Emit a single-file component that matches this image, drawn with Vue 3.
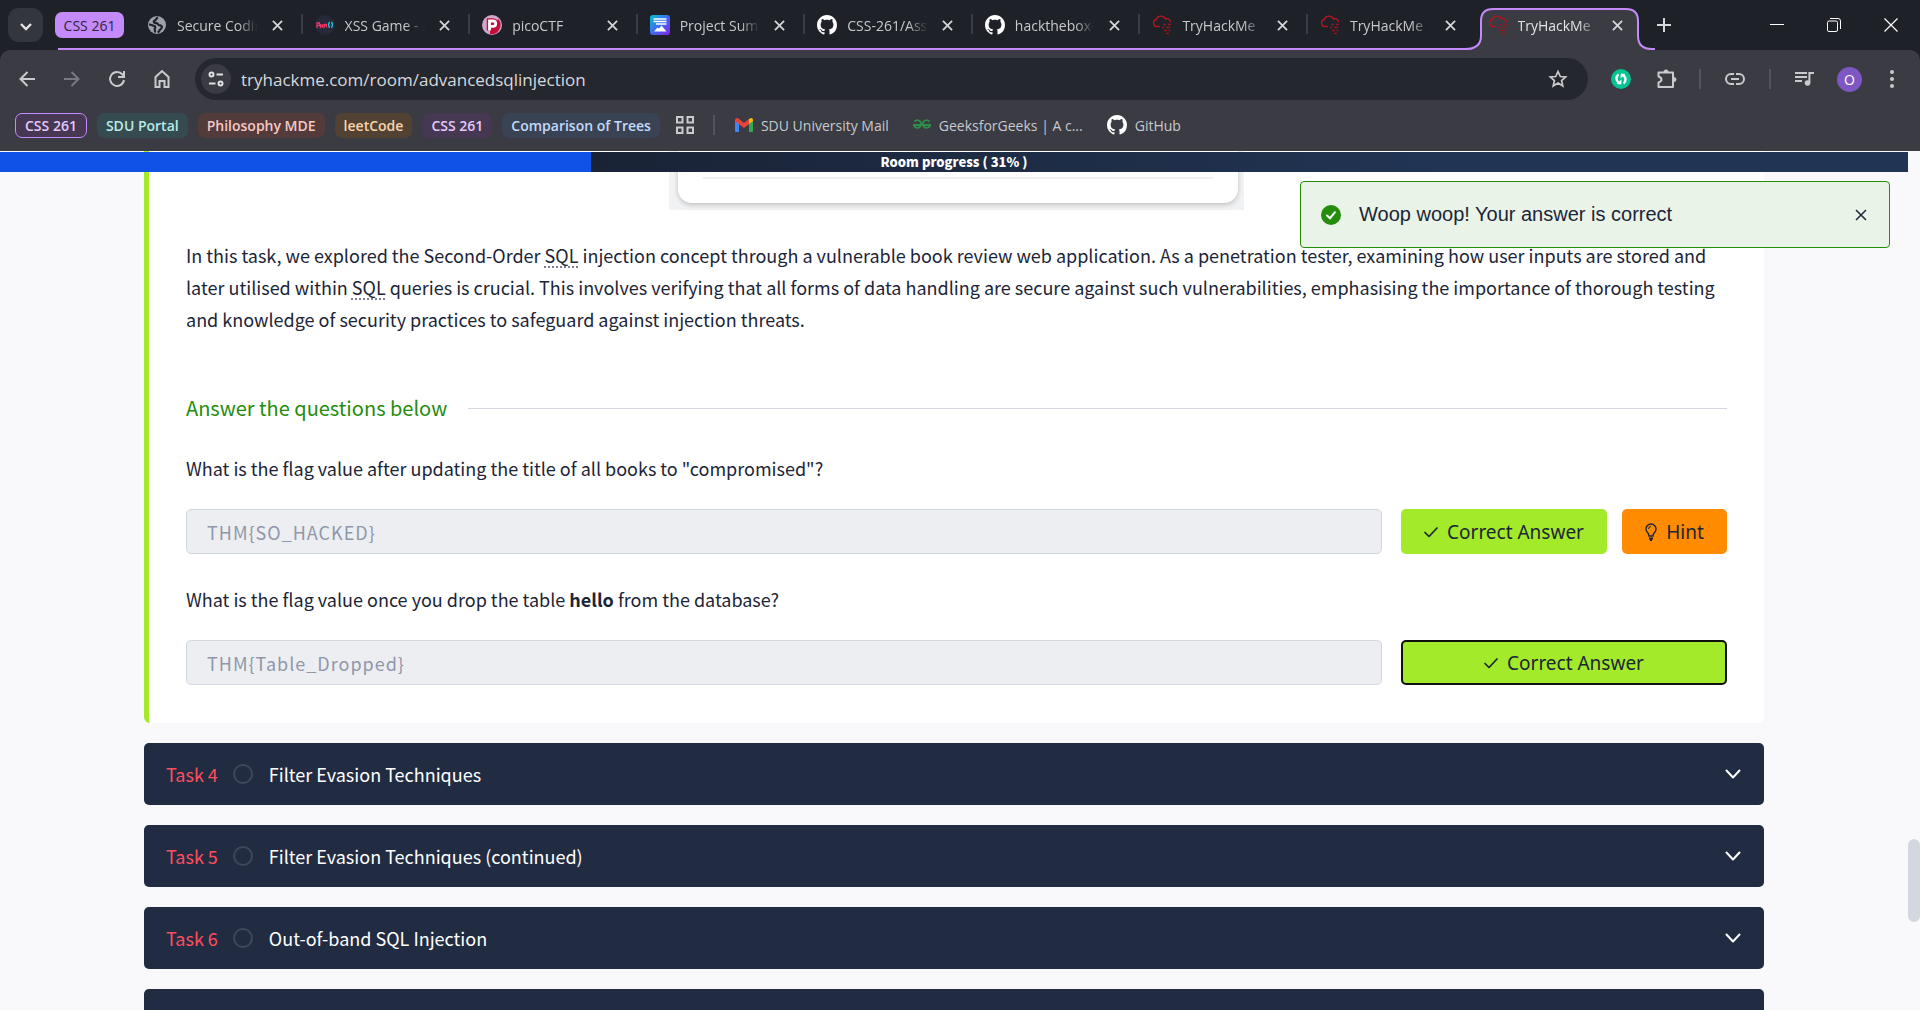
<script setup>
import { ref } from 'vue'

const tabs = [
  { title: 'Secure Coding', icon: 'globe' },
  { title: 'XSS Game - P', icon: 'pwn' },
  { title: 'picoCTF', icon: 'pico' },
  { title: 'Project Summ', icon: 'project' },
  { title: 'CSS-261/Assi', icon: 'github' },
  { title: 'hackthebox-w', icon: 'github' },
  { title: 'TryHackMe | L', icon: 'thm' },
  { title: 'TryHackMe | A', icon: 'thm' },
  { title: 'TryHackMe | A', icon: 'thm', active: true },
]

const groups = [
  { name: 'CSS 261', tone: 'open' },
  { name: 'SDU Portal', tone: 'teal' },
  { name: 'Philosophy MDE', tone: 'red' },
  { name: 'leetCode', tone: 'orange' },
  { name: 'CSS 261', tone: 'purple' },
  { name: 'Comparison of Trees', tone: 'blue' },
]

const address = ref('tryhackme.com/room/advancedsqlinjection')
const progress = 31
const tasks = [
  { id: 4, title: 'Filter Evasion Techniques' },
  { id: 5, title: 'Filter Evasion Techniques (continued)' },
  { id: 6, title: 'Out-of-band SQL Injection' },
  { id: 7, title: '' },
]
</script>

<template>
  <div class="window">
    <svg class="defs" aria-hidden="true">
      <symbol id="github" viewBox="0 0 16 16">
        <path fill="currentColor" d="M8 0C3.58 0 0 3.58 0 8c0 3.54 2.29 6.53 5.47 7.59.4.07.55-.17.55-.38 0-.19-.01-.82-.01-1.49-2.01.37-2.53-.49-2.69-.94-.09-.23-.48-.94-.82-1.13-.28-.15-.68-.52-.01-.53.63-.01 1.08.58 1.23.82.72 1.21 1.87.87 2.33.66.07-.52.28-.87.51-1.07-1.78-.2-3.64-.89-3.64-3.95 0-.87.31-1.59.82-2.15-.08-.2-.36-1.02.08-2.12 0 0 .67-.21 2.2.82.64-.18 1.32-.27 2-.27s1.36.09 2 .27c1.53-1.04 2.2-.82 2.2-.82.44 1.1.16 1.92.08 2.12.51.56.82 1.27.82 2.15 0 3.07-1.87 3.75-3.65 3.95.29.25.54.73.54 1.48 0 1.07-.01 1.93-.01 2.2 0 .21.15.46.55.38A8.01 8.01 0 0 0 16 8c0-4.42-3.58-8-8-8z" />
      </symbol>
      <symbol id="globe" viewBox="0 0 20 20">
        <circle cx="10" cy="10" r="9" fill="#9da1a8" />
        <path d="M11 2.500c-2 .8-1.400 2-2.600 2.600S6 6.200 7.200 7.400s3.400.2 3.800 1.800 2.400.8 3.400 1.600.4 2.600-1 3.600-1.200 2.400-2.800 3.200M2 9.500c2 0 3 .6 4.400 1.200s2.600 1 1.600 2.400.4 2.400 0 4.400" fill="none" stroke="#1e2128" stroke-width="2.200" />
      </symbol>
      <symbol id="pwn" viewBox="0 0 20 20">
        <circle cx="10" cy="10" r="10" fill="#262937" />
        <g fill="none" stroke-width="1.300">
          <path stroke="#f0356b" d="M2 13V8h2.400v2.600H2M5.500 9v3.200l1.200-1.500 1.200 1.500V9M9.500 12.500V9.500h2v3" />
          <path stroke="#1cc6d6" d="M14.500 6.800q-1.800 3 0 6M16.500 6.800q1.800 3 0 6" />
        </g>
      </symbol>
      <symbol id="pico" viewBox="0 0 20 20">
        <circle cx="10" cy="10" r="10" fill="#cfa9cc" />
        <path d="M16.500 4A9.500 9.500 0 0 1 8 19.300V12z" fill="#c1103a" />
        <path d="M7.500 15.500V6H11a2.700 2.700 0 0 1 0 5.400H8" fill="none" stroke="#c1103a" stroke-width="5.500" />
        <path d="M7.500 15.500V6H11a2.700 2.700 0 0 1 0 5.400H8" fill="none" stroke="#fff" stroke-width="2.800" />
      </symbol>
      <symbol id="project" viewBox="0 0 20 20">
        <linearGradient id="projectFill" x1="0" y1="0" x2="1" y2="1">
          <stop offset="0" stop-color="#06c3cf" /><stop offset=".5" stop-color="#3d6bf2" /><stop offset="1" stop-color="#8a22e6" />
        </linearGradient>
        <rect width="20" height="20" rx="3" fill="url(#projectFill)" />
        <path d="M3.500 4h13M3.500 6.500h13M6 9h10.500" stroke="#fff" stroke-width="1.600" />
        <path d="M4 16.500 7.500 12.500l1.500 1 2.500-3 5 6z" fill="#fff" />
      </symbol>
      <symbol id="thm" viewBox="0 0 20 20">
        <path d="M8 11.500H4.500a3.600 3.600 0 0 1-.3-7A5 5 0 0 1 13.500 4a3.400 3.400 0 0 1 5 3.500" fill="none" stroke="#b3161b" stroke-width="1.300" />
        <path d="M11 9.500h3m2 0h3M10 12.500h2m2 0h4M12 15.500h3m1.500 0h2M14 18.500h3" stroke="#8d181d" stroke-width="1.500" />
      </symbol>
      <symbol id="check" viewBox="0 0 14 14">
        <path d="m1 7.500 4 4L13 3" fill="none" stroke="currentColor" stroke-width="1.700" stroke-linecap="round" stroke-linejoin="round" />
      </symbol>
      <symbol id="cross" viewBox="0 0 12 12">
        <path d="m1 1 10 10M11 1 1 11" fill="none" stroke="currentColor" stroke-width="1.900" />
      </symbol>
    </svg>

    <header class="browser">
      <div class="tab-strip">
        <button class="tab-search" aria-label="Search tabs">
          <svg width="12" height="8" viewBox="0 0 12 8"><path d="m1 1 5 5 5-5" fill="none" stroke="#e3e4e8" stroke-width="2.400" /></svg>
        </button>
        <button class="tab-group">CSS 261</button>
        <nav class="tabs" aria-label="Tabs">
          <div v-for="(tab, i) in tabs" :key="i" class="tab" :class="{ active: tab.active }">
            <svg v-if="tab.active" class="tab-shape" width="190" height="42" viewBox="0 0 190 42">
              <path d="M0 42Q16 42 16 28V13Q16 1 28 1H161Q173 1 173 13V28Q173 42 190 42z" fill="#3a3b43" />
              <path d="M0 41Q16 41 16 28V13Q16 1 28 1H161Q173 1 173 13V28Q173 41 187 41H190" fill="none" stroke="#c58af9" stroke-width="2" />
            </svg>
            <svg class="favicon"><use :href="'#' + tab.icon" /></svg>
            <span class="tab-title">{{ tab.title }}</span>
            <button class="tab-close" aria-label="Close tab"><svg width="11" height="11"><use href="#cross" /></svg></button>
          </div>
        </nav>
        <div class="strip-end">
          <button class="icon" aria-label="New tab">
            <svg width="14" height="14" viewBox="0 0 14 14"><path d="M7 0v14M0 7h14" stroke="#d6d8dc" stroke-width="2" /></svg>
          </button>
          <div class="window-buttons">
            <button class="icon" aria-label="Minimize"><svg width="14" height="14" viewBox="0 0 14 14"><path d="M0 6.500h14" stroke="#fff" /></svg></button>
            <button class="icon" aria-label="Restore">
              <svg width="14" height="14" viewBox="0 0 14 14" fill="none" stroke="#fff"><rect x=".5" y="3" width="10" height="10.500" rx="1.500" /><path d="M3 .5h8Q13.500.5 13.500 3v8" /></svg>
            </button>
            <button class="icon" aria-label="Close window"><svg width="14" height="14" viewBox="0 0 14 14"><path d="m.5.5 13 13M13.500.5.5 13.500" stroke="#fff" stroke-width="1.200" /></svg></button>
          </div>
        </div>
      </div>

      <div class="toolbar">
        <div class="nav-buttons">
          <button class="icon" aria-label="Back"><svg width="18" height="18" viewBox="0 0 18 18" fill="none" stroke="#c9cacf" stroke-width="2"><path d="M17 9H3M9.500 2 2.500 9l7 7" /></svg></button>
          <button class="icon" aria-label="Forward"><svg width="18" height="18" viewBox="0 0 18 18" fill="none" stroke="#787a81" stroke-width="2"><path d="M1 9h14M8.500 2l7 7-7 7" /></svg></button>
          <button class="icon" aria-label="Reload"><svg width="18" height="18" viewBox="0 0 18 18" fill="none" stroke="#c9cacf" stroke-width="2"><path d="M16 10A7 7 0 1 1 14.500 4.500L16 6" /><path d="M16 1v6h-6" /></svg></button>
          <button class="icon" aria-label="Home"><svg width="18" height="20" viewBox="0 0 18 20" fill="none" stroke="#c9cacf" stroke-width="2"><path d="M2.500 18V8L9 2l6.500 6v10h-4v-6h-5v6z" /></svg></button>
        </div>
        <div class="omnibox">
          <button class="site-info" aria-label="View site information">
            <svg width="16" height="16" viewBox="0 0 16 16" fill="none" stroke="#dfe0e4" stroke-width="2"><circle cx="3.500" cy="3.500" r="2" /><path d="M8.500 3.500H15M1 12.500h6.500" /><circle cx="12.500" cy="12.500" r="2" /></svg>
          </button>
          <input v-model="address" class="address" type="text" aria-label="Address" spellcheck="false" />
          <button class="icon" aria-label="Bookmark this page"><svg width="20" height="20" viewBox="0 0 20 20"><path d="m10 2.500 2.300 5 5.400.5-4.100 3.600 1.200 5.400-4.800-2.900L5.200 17l1.200-5.400L2.300 8l5.400-.5z" fill="none" stroke="#c9cacf" stroke-width="1.700" /></svg></button>
        </div>
        <div class="extensions">
          <button class="icon slot" aria-label="Sync extension">
            <svg width="20" height="20" viewBox="0 0 20 20"><circle cx="10" cy="10" r="10" fill="#06c392" /><path d="M7.500 5.500A5 5 0 0 0 7.500 13.500M12.500 14.500A5 5 0 0 0 12.500 6.500" fill="none" stroke="#fff" stroke-width="2.400" /><path d="m10.500 10.500-.3 5-4.700-.5zM9.500 9.500l.3-5 4.700.5z" fill="#fff" /></svg>
          </button>
          <button class="icon slot" aria-label="Extensions">
            <svg width="22" height="22" viewBox="0 0 22 22"><path d="M2.500 4.500H17V19H2.500v-4.500q3-1 3-3t-3-3z" fill="none" stroke="#c9cacf" stroke-width="2" stroke-linejoin="round" /><path d="M7.500 4a2.500 2.500 0 0 1 5 0zM18 9a2.500 2.500 0 0 1 0 5z" fill="#c9cacf" /></svg>
          </button>
          <span class="divider"></span>
          <button class="icon slot wide" aria-label="Copy link"><svg width="20" height="12" viewBox="0 0 20 12" fill="none" stroke="#c9cacf" stroke-width="2"><path d="M9 1H6a5 5 0 0 0 0 10h3M11 1h3a5 5 0 0 1 0 10h-3M6 6h8" /></svg></button>
          <span class="divider"></span>
          <button class="icon slot wide" aria-label="Media controls"><svg width="20" height="18" viewBox="0 0 20 18" fill="none" stroke="#c9cacf" stroke-width="2"><path d="M0 3h12M0 7h12M0 11h7" /><circle cx="12.500" cy="13" r="2.800" fill="#c9cacf" stroke="none" /><path d="M14.400 13V3H19" /></svg></button>
          <button class="avatar" aria-label="Profile">O</button>
          <button class="icon slot" aria-label="Menu"><svg width="4" height="18" viewBox="0 0 4 18" fill="#c9cacf"><circle cx="2" cy="2" r="2" /><circle cx="2" cy="9" r="2" /><circle cx="2" cy="16" r="2" /></svg></button>
        </div>
      </div>

      <nav class="bookmarks" aria-label="Bookmarks">
        <button v-for="(group, i) in groups" :key="i" class="group" :class="group.tone">{{ group.name }}</button>
        <button class="icon apps" aria-label="Apps">
          <svg width="18" height="18" viewBox="0 0 18 18" fill="none" stroke="#c9cacf" stroke-width="2"><path d="M1 1h5.500v5.500H1zM11.500 1H17v5.500h-5.500zM1 11.500h5.500V17H1zM11.500 11.500H17V17h-5.500z" /></svg>
        </button>
        <span class="divider"></span>
        <a class="bookmark" href="#">
          <svg width="18" height="14" viewBox="0 0 18 14"><path d="M0 2v11q0 1 1 1h3V5z" fill="#4285f4" /><path d="M18 2v11q0 1-1 1h-3V5z" fill="#34a853" /><path d="M14 1v5l4-3V2q0-2-2-2z" fill="#fbbc04" /><path d="M0 2q0-2 2-2l1 .3L9 5l5-4v5.200L9 10 0 3z" fill="#ea4335" /></svg>
          SDU University Mail
        </a>
        <a class="bookmark" href="#">
          <svg width="18" height="12" viewBox="0 0 18 12" fill="none" stroke="#2f8d46" stroke-width="1.800"><path d="M0 6h18M1.500 2.500q2-2 4.500-1T8 6a3.800 3.800 0 0 1-7.200.5M16.500 2.500q-2-2-4.500-1T10 6a3.800 3.800 0 0 0 7.200.5" /></svg>
          GeeksforGeeks | A c...
        </a>
        <a class="bookmark" href="#">
          <svg class="gh" width="20" height="20"><use href="#github" /></svg>
          GitHub
        </a>
      </nav>
    </header>

    <main class="page">
      <div class="room-progress" role="progressbar" :aria-valuenow="progress" aria-valuemin="0" aria-valuemax="100">
        <div class="room-progress-fill" :style="{ width: progress + '%' }"></div>
        <span>Room progress ( {{ progress }}% )</span>
      </div>

      <div class="toast" role="status">
        <svg width="20" height="20" viewBox="0 0 20 20"><circle cx="10" cy="10" r="10" fill="#258c0c" /><path d="m6 10.500 3 2.700 5-6" fill="none" stroke="#fff" stroke-width="2" stroke-linecap="round" /></svg>
        <p>Woop woop! Your answer is correct</p>
        <button class="icon" aria-label="Dismiss"><svg width="12" height="12" viewBox="0 0 12 12"><path d="m1 1 10 10M11 1 1 11" stroke="#1c2538" stroke-width="1.500" /></svg></button>
      </div>

      <div class="scroll-thumb"></div>

      <div class="content">
        <article class="task-body">
          <figure class="shot"><div class="shot-card"><hr /></div></figure>
          <p class="prose">
            In this task, we explored the Second-Order <abbr title="Structured Query Language">SQL</abbr> injection concept through a vulnerable book review web application. As a penetration tester, examining how user inputs are stored and later utilised within <abbr title="Structured Query Language">SQL</abbr> queries is crucial. This involves verifying that all forms of data handling are secure against such vulnerabilities, emphasising the importance of thorough testing and knowledge of security practices to safeguard against injection threats.
          </p>
          <h2 class="questions-title">Answer the questions below</h2>

          <section class="question">
            <label for="answer-1">What is the flag value after updating the title of all books to "compromised"?</label>
            <div class="answer-row">
              <input id="answer-1" type="text" value="THM{SO_HACKED}" disabled />
              <div class="actions">
                <button class="btn correct"><svg width="14" height="14"><use href="#check" /></svg>Correct Answer</button>
                <button class="btn hint">
                  <svg width="12" height="18" viewBox="0 0 12 18" fill="none" stroke="currentColor" stroke-width="1.400"><path d="M4 13q0-2-1.500-3.500a5 5 0 1 1 7 0Q8 11 8 13z" /><path d="M4 15.500h4M5 17.500h2" stroke-width="2" /><path d="M3.500 6q0-2.500 2.500-2.500" stroke-width="1" /></svg>Hint
                </button>
              </div>
            </div>
          </section>

          <section class="question">
            <label for="answer-2">What is the flag value once you drop the table <strong>hello</strong> from the database?</label>
            <div class="answer-row">
              <input id="answer-2" type="text" value="THM{Table_Dropped}" disabled />
              <div class="actions">
                <button class="btn correct focused"><svg width="14" height="14"><use href="#check" /></svg>Correct Answer</button>
              </div>
            </div>
          </section>
        </article>

        <button v-for="task in tasks" :key="task.id" class="task" :aria-label="'Task ' + task.id">
          <template v-if="task.title">
            <span class="task-number">Task {{ task.id }}</span>
            <span class="task-state"></span>
            <span class="task-title">{{ task.title }}</span>
            <svg width="16" height="10" viewBox="0 0 16 10"><path d="m1.500 1.500 6.500 7 6.500-7" fill="none" stroke="#fff" stroke-width="2" stroke-linecap="round" stroke-linejoin="round" /></svg>
          </template>
        </button>
      </div>
    </main>
  </div>
</template>

<style>
body {
  margin: 0;
  background: #f9f9fb;
}
</style>

<style scoped>
* {
  box-sizing: border-box;
}
button,
input {
  font: inherit;
  border: 0;
  padding: 0;
  margin: 0;
}
button {
  background: none;
  color: inherit;
  white-space: nowrap;
}
svg {
  flex: none;
}
.defs {
  position: absolute;
  width: 0;
  height: 0;
}
.window {
  display: flex;
  flex-direction: column;
  height: 100vh;
  overflow: hidden;
}
.icon {
  display: flex;
  align-items: center;
  justify-content: center;
}
.divider {
  width: 2px;
  height: 20px;
  background: #53555e;
}

/* Browser frame */
.browser {
  flex: none;
  font: 14px 'Open Sans', 'Noto Sans', sans-serif;
  background: #1e2128;
  color: #c7c9ce;
}
.tab-strip {
  position: relative;
  display: flex;
  align-items: center;
  height: 50px;
  padding-left: 8px;
}
.tab-strip::after {
  content: '';
  position: absolute;
  left: 58px;
  right: 266px;
  bottom: 0;
  height: 2px;
  background: #c58af9;
}
.tab-search {
  width: 35px;
  height: 34px;
  border-radius: 11px;
  background: #34363d;
}
.tab-group {
  width: 69px;
  height: 26px;
  margin: 0 10px 0 12px;
  border-radius: 7px;
  background: #c58af9;
  color: #2c2440;
}
.tabs {
  flex: 1;
  display: flex;
  min-width: 0;
}
.tab {
  position: relative;
  flex: 1;
  display: flex;
  align-items: center;
  min-width: 0;
  height: 50px;
  padding: 0 19px 0 13px;
}
.tab:not(.active)::after {
  content: '';
  position: absolute;
  right: -1px;
  top: 14px;
  width: 2px;
  height: 20px;
  background: #3b3d45;
}
.tab:nth-last-child(2)::after {
  display: none;
}
.active {
  z-index: 1;
  color: #e3e4e8;
}
.tab-shape {
  position: absolute;
  left: -10px;
  bottom: 0;
}
.favicon {
  position: relative;
  width: 20px;
  height: 20px;
  color: #fff;
}
.tab-title {
  position: relative;
  flex: 1;
  margin: 0 14px 0 10px;
  overflow: hidden;
  white-space: nowrap;
  mask-image: linear-gradient(to right, #000 75%, transparent);
}
.tab-close {
  position: relative;
  display: flex;
  color: #d6d8dc;
}
.strip-end {
  flex: none;
  display: flex;
  align-items: center;
  justify-content: space-between;
  width: 278px;
  padding: 0 22px 0 15px;
}
.window-buttons {
  display: flex;
  gap: 43px;
}
.toolbar {
  display: flex;
  align-items: center;
  height: 58px;
  padding-right: 12px;
  border-radius: 10px 10px 0 0;
  background: #3a3b43;
}
.nav-buttons {
  display: flex;
  gap: 27px;
  padding: 0 24px 0 18px;
}
.omnibox {
  flex: 1;
  display: flex;
  align-items: center;
  height: 42px;
  padding: 0 20px 0 6px;
  border-radius: 21px;
  background: #25272f;
}
.site-info {
  display: flex;
  align-items: center;
  justify-content: center;
  width: 30px;
  height: 30px;
  border-radius: 50%;
  background: #3a3b43;
}
.address {
  flex: 1;
  min-width: 0;
  margin-left: 10px;
  background: none;
  color: #d7d8dc;
  font-size: 17px;
  outline: 0;
}
.extensions {
  display: flex;
  align-items: center;
  padding-left: 10px;
}
.slot {
  width: 46px;
}
.slot.wide {
  width: 68px;
}
.slot:last-child {
  width: 32px;
}
.extensions .slot:nth-child(2) {
  margin-right: 9px;
}
.avatar {
  width: 25px;
  height: 25px;
  margin: 0 14px 0 -2px;
  border-radius: 50%;
  background: #7e57c2;
  color: #fff;
}
.bookmarks {
  display: flex;
  align-items: center;
  height: 43px;
  padding: 0 15px 9px;
  background: #3a3b43;
}
.group {
  height: 25px;
  margin-right: 10px;
  padding: 0 9px;
  border-radius: 7px;
  font-weight: 600;
}
.open,
.purple {
  background: #463852;
  color: #e4c9fb;
}
.open {
  border: 1px solid #c58af9;
}
.teal {
  background: #354b4f;
  color: #b8ebe9;
}
.red {
  background: #533a3b;
  color: #f6c9c4;
}
.orange {
  background: #524234;
  color: #fbd3ab;
}
.blue {
  background: #3a4353;
  color: #c3dafb;
}
.apps {
  margin: 0 19px 0 6px;
}
.bookmark {
  display: flex;
  align-items: center;
  gap: 8px;
  margin-left: 20px;
  color: #c7c9ce;
  text-decoration: none;
}
.bookmark + .bookmark {
  margin-left: 24px;
}
.gh {
  color: #fff;
}

/* Room page */
.page {
  position: relative;
  flex: 1;
  min-height: 0;
  overflow: hidden;
  padding: 0 156px 0 144px;
  background: #f9f9fb;
  font: 18px 'Noto Sans CJK SC', 'Noto Sans', sans-serif;
  color: #1c2538;
}
.room-progress {
  position: absolute;
  z-index: 1;
  top: 1px;
  left: 0;
  right: 12px;
  height: 20px;
  background: linear-gradient(to right, #1a2336 31%, #213453 75%);
  color: #fff;
  font-size: 13px;
  font-weight: 900;
  line-height: 19px;
  text-align: center;
}
.room-progress-fill {
  position: absolute;
  inset: 0 auto 0 0;
  background: #1052e6;
}
.toast {
  position: absolute;
  z-index: 1;
  top: 30px;
  right: 30px;
  display: flex;
  align-items: center;
  width: 590px;
  height: 67px;
  padding: 0 22px 0 20px;
  border: 1px solid #258c0c;
  border-radius: 4px;
  background: #e9f3e7;
  font: 20px 'Liberation Sans', sans-serif;
}
.toast p {
  flex: 1;
  margin: 0 0 0 18px;
}
.scroll-thumb {
  position: absolute;
  right: 0;
  top: 688px;
  width: 12px;
  height: 83px;
  border-radius: 6px;
  background: #d3d8e0;
}
.content {
  display: flex;
  flex-direction: column;
  gap: 20px;
}
.task-body {
  padding: 0 37px 38px;
  border-left: 5px solid #a3ea2a;
  border-radius: 0 0 6px 6px;
  background: #fff;
}
.shot {
  display: flex;
  width: 575px;
  height: 59px;
  margin: 0 auto;
  padding: 0 6px 7px 9px;
  overflow: hidden;
  background: #f1f2f3;
}
.shot-card {
  flex: 1;
  padding: 26px 25px 0;
  border-radius: 0 0 14px 14px;
  background: #fff;
  box-shadow: 0 2px 5px rgb(0 0 0 / 20%);
}
.shot-card hr {
  margin: 0;
  border: 0;
  border-top: 2px solid #eeeff3;
}
.prose {
  margin: 29px 0 58px;
  line-height: 32px;
}
abbr {
  text-decoration: underline dotted #7b8190;
  text-underline-offset: 4px;
}
.questions-title {
  display: flex;
  align-items: center;
  gap: 21px;
  margin: 0 0 29px;
  color: #258c0c;
  font-size: 20px;
  font-weight: 400;
  line-height: 30px;
}
.questions-title::after {
  content: '';
  flex: 1;
  height: 1px;
  background: #d3d8e0;
}
.question + .question {
  margin-top: 29px;
}
.question label {
  display: block;
  line-height: 32px;
}
.answer-row {
  display: flex;
  gap: 19px;
  margin-top: 25px;
}
.answer-row input {
  flex: 1;
  min-width: 0;
  height: 45px;
  padding: 0 20px;
  border: 1px solid #d3d8e0;
  border-radius: 5px;
  background: #edeef2;
  color: #8f97ab;
  letter-spacing: 1px;
}
.actions {
  display: flex;
  gap: 15px;
  width: 326px;
}
.btn {
  display: flex;
  align-items: center;
  justify-content: center;
  gap: 9px;
  height: 45px;
  border-radius: 5px;
  font-family: 'Noto Sans', 'Open Sans', sans-serif;
  font-size: 19px;
}
.correct {
  flex: 1;
  background: #a3ea2a;
}
.hint {
  width: 105px;
  background: #ff8b00;
}
.focused {
  border: 2px solid #101010;
}
.task {
  display: flex;
  align-items: center;
  height: 62px;
  padding: 0 23px 0 22px;
  border-radius: 5px;
  background: #212c42;
  color: #fff;
  text-align: left;
}
.task-number {
  color: #ff4d5e;
}
.task-state {
  width: 20px;
  height: 20px;
  margin: 0 16px 0 15px;
  border: 2px solid #3d4859;
  border-radius: 50%;
}
.task-title {
  flex: 1;
}
</style>
